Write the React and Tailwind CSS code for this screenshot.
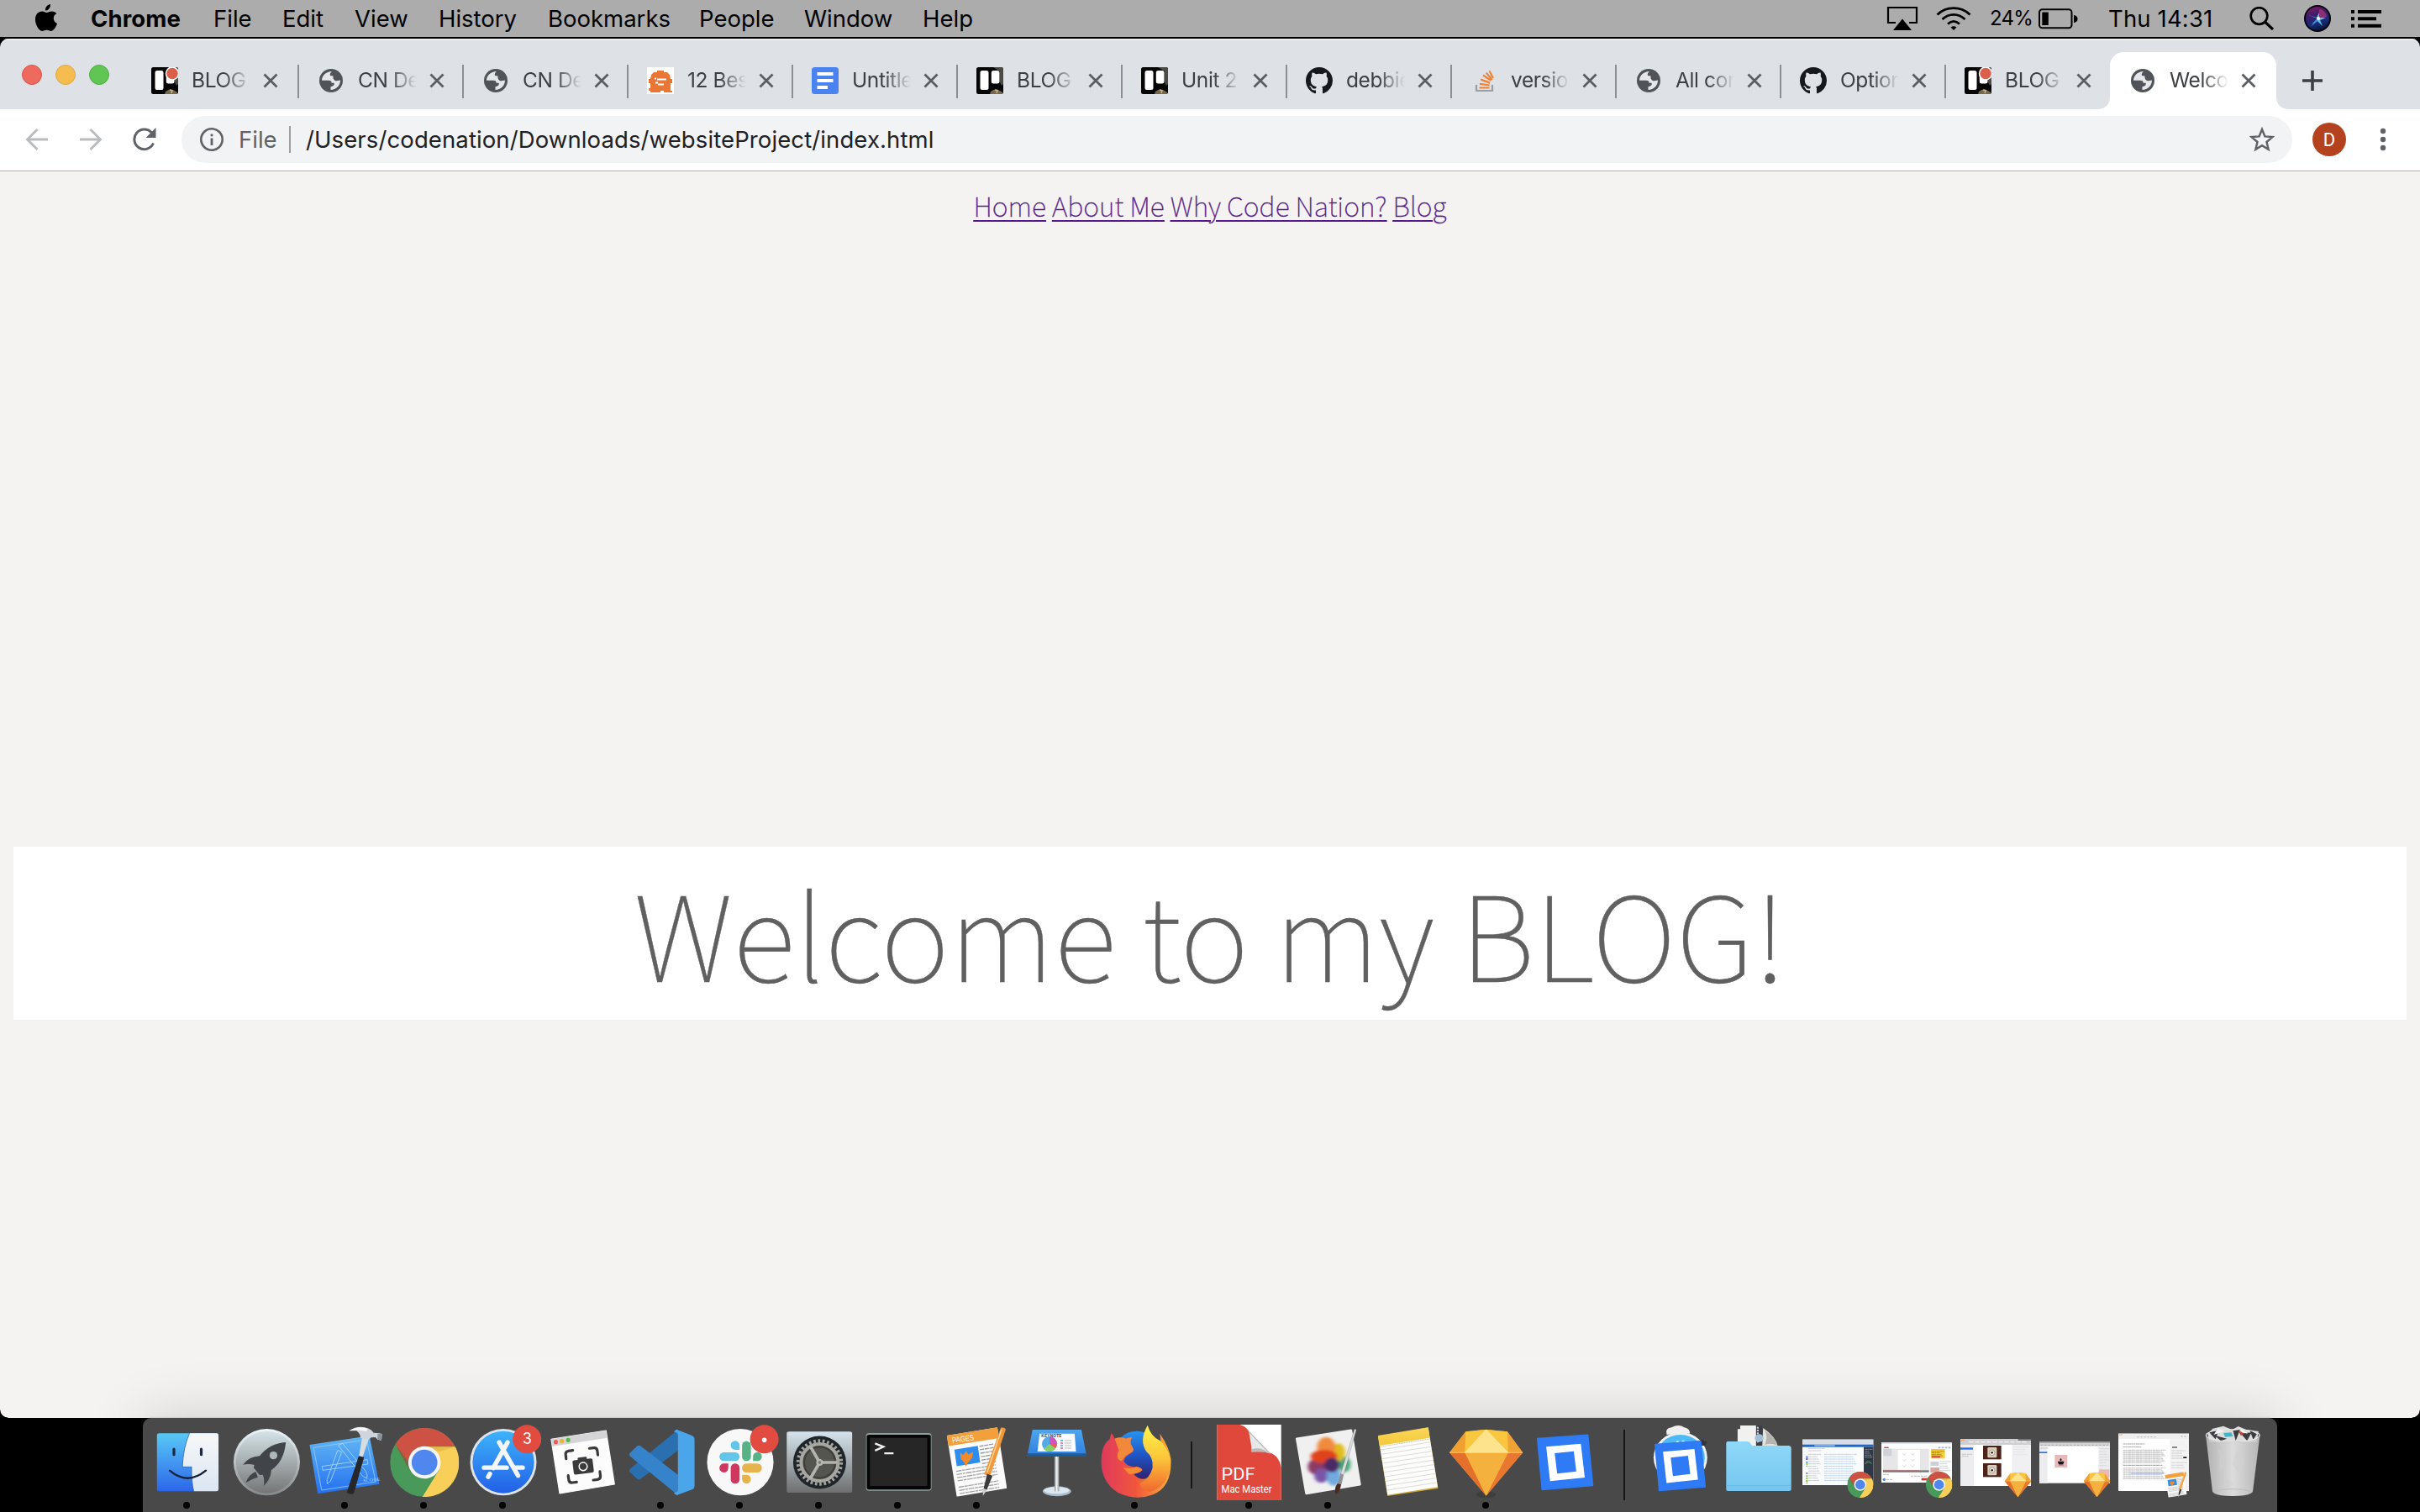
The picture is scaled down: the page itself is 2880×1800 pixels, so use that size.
import React from "react";

const MENUS = [
  ["Chrome", "w-[146px] font-bold tracking-[0.1px]"],
  ["File", "w-[82px]"],
  ["Edit", "w-[86px]"],
  ["View", "w-[100px]"],
  ["History", "w-[130px]"],
  ["Bookmarks", "w-[180px]"],
  ["People", "w-[125px]"],
  ["Window", "w-[141px]"],
  ["Help", "w-[100px]"],
];

const TABS = [
  ["trelloBadge", "BLOG"],
  ["globe", "CN De"],
  ["globe", "CN De"],
  ["orange", "12 Bes"],
  ["docs", "Untitle"],
  ["trello", "BLOG"],
  ["trello", "Unit 2"],
  ["github", "debbie"],
  ["stack", "versio"],
  ["globe", "All con"],
  ["github", "Option"],
  ["trelloBadge", "BLOG"],
  ["globe", "Welco"],
];

/* ---------- menu bar ---------- */

function AppleLogo() {
  return (
    <svg className="h-8 w-[26px]" viewBox="0 0 26 32">
      <path d="M18 0c.3 2.2-.6 4-1.700 5.400C15.100 6.900 13.400 7.700 11.900 7.600 11.600 5.500 12.500 3.700 13.600 2.400 14.800 1.100 16.600.2 18 0ZM25.300 10.900c-2.300 1.400-3.500 3.400-3.500 5.900 0 2.900 1.600 5.100 4.200 6.200-1.200 3.900-4 8.900-7.300 8.900-1.900 0-2.800-1.200-5.200-1.200-2.500 0-3.500 1.200-5.200 1.200C4.700 31.900 0 25 0 18.200 0 12.100 3.700 8.500 8 8.500c2.400 0 4 1.400 5.600 1.400 1.500 0 3.300-1.500 6.200-1.500 2.100 0 4.200 1 5.500 2.500Z" />
    </svg>
  );
}

function MenuBar() {
  return (
    <div className="flex h-11 shrink-0 items-center bg-[#acacac] pr-[46px] text-[27.500px] text-black">
      <div className="flex w-[108px] pl-[42px] pb-[3px]"><AppleLogo /></div>
      {MENUS.map(([t, c]) => (
        <div key={t} className={"whitespace-nowrap leading-[44px] " + c}>{t}</div>
      ))}
      <div className="flex-1" />
      <svg className="mr-[21px] h-[30px] w-[38px]" viewBox="0 0 38 30">
        <path d="M11 20H2V2h34v18h-9" fill="none" stroke="#000" strokeWidth="2.200" />
        <path d="M19 15.500 30 29H8Z" />
      </svg>
      <svg className="mr-[22px] h-[30px] w-[42px]" viewBox="0 0 42 30" fill="none" stroke="#000" strokeWidth="2.800">
        <path d="M1.500 10.500c11-10.500 28-10.500 39 0M7.500 16c8-7.500 19-7.500 27 0M14 21.500c4.500-4 9.500-4 14 0" />
        <path d="M17.500 25.500c2.200-1.600 4.800-1.600 7 0L21 29Z" fill="#000" stroke="none" />
      </svg>
      <div className="w-[58px] whitespace-nowrap text-[24px] leading-[44px] tracking-[-0.8px]">24%</div>
      <svg className="mr-[36px] h-[25px] w-[47px]" viewBox="0 0 47 25">
        <rect x="1" y="1.200" width="38.500" height="22" rx="3.500" fill="none" stroke="#000" strokeWidth="2" />
        <rect x="4.300" y="4.500" width="7.500" height="15.500" />
        <path d="M42 8c6 0 6 9 0 9Z" />
      </svg>
      <div className="w-[168px] whitespace-nowrap leading-[44px] tracking-[0.150px]">Thu 14:31</div>
      <svg className="mr-[36px] h-7 w-[29px]" viewBox="0 0 29 28" fill="none" stroke="#000" strokeWidth="2.700">
        <circle cx="11.500" cy="11" r="9.800" /><path d="m18.500 18 9.500 9" strokeWidth="3.200" />
      </svg>
      <svg className="mr-[24px] h-8 w-8" viewBox="0 0 32 32">
        <defs>
          <linearGradient id="siri" x1="0.300" y1="0" x2="0.600" y2="1">
            <stop offset="0" stopColor="#7a1766" /><stop offset=".35" stopColor="#3b1d6a" /><stop offset=".7" stopColor="#152c7a" /><stop offset="1" stopColor="#0b1233" />
          </linearGradient>
        </defs>
        <circle cx="16" cy="16" r="16" fill="#050510" /><circle cx="16" cy="16" r="14" fill="url(#siri)" />
        <path d="M18 5c5 0 9 5 9 9l-9 2Z" fill="#c23a78" opacity=".6" />
        <path d="M16 16 5 12l10 3 3-6 0 6 8 0-7 3 3 7-6-6-7 4Z" fill="#5fc4dc" />
        <path d="M16 16 8 26l9-8Z" fill="#3a8fe0" />
        <circle cx="17" cy="16" r="2" fill="#e8fbff" />
      </svg>
      <svg className="h-[21px] w-9" viewBox="0 0 36 21">
        <path d="M0 0h4v4H0zM8 0h28v4H8zM0 8.300h4v4H0zM8 8.300h22v4H8zM0 16.700h4v4H0zM8 16.700h28v4H8z" />
      </svg>
    </div>
  );
}

/* ---------- tab strip ---------- */

function Favicon({ kind }) {
  if (kind === "globe")
    return (
      <svg className="h-8 w-8" viewBox="-2 -2 32 32">
        <circle cx="14" cy="14" r="14" fill="#505459" />
        <path d="M3 13.800C3 8 8 3.200 15 3c-2 1.600-2.600 3.500-2 5l3.600.4C15.800 11.500 18 14.600 21 14.300l4-.8C25 20 20 24.800 13.500 25v-3.800c3.600-.3 5-2.600 4-4.400h-3c.4-2-1-3-3.500-3Z" fill="#e4e6e9" />
      </svg>
    );
  if (kind === "docs")
    return (
      <svg className="h-8 w-8" viewBox="0 0 32 32">
        <rect width="32" height="32" rx="3.500" fill="#4a83ef" />
        <path d="M6.500 6h19v4h-19zM6.500 14h19v4h-19zM6.500 22H19v4H6.500z" fill="#fff" />
      </svg>
    );
  if (kind === "orange")
    return (
      <svg className="h-8 w-8" viewBox="0 0 32 32">
        <rect width="32" height="32" fill="#fff" />
        <path d="M12 4h8v2h4l3 3 1 5h2v5h-2v9h2v2H20v-2h-4v2H4v-2H2v-3h2v-6H2v-5h2l1-5 3-3h4Z" fill="#ea7635" />
        <path d="M9 13.500h2M12 14.500h11M10 18.500h3M13 20.500h7" stroke="#fff" strokeWidth="1.800" />
      </svg>
    );
  if (kind === "github")
    return (
      <svg className="h-8 w-8" viewBox="0 0 16 16">
        <path fill="#16181b" d="M8 0C3.580 0 0 3.580 0 8c0 3.540 2.290 6.530 5.470 7.590.4.070.55-.17.55-.38 0-.19-.01-.82-.01-1.490-2.010.37-2.530-.49-2.690-.94-.09-.23-.48-.94-.82-1.130-.28-.15-.68-.52-.01-.53.63-.01 1.080.58 1.230.82.72 1.210 1.870.87 2.330.66.07-.52.28-.87.51-1.070-1.780-.2-3.640-.89-3.640-3.950 0-.87.31-1.590.82-2.150-.08-.2-.36-1.020.08-2.120 0 0 .67-.21 2.200.82.64-.18 1.320-.27 2-.27s1.360.09 2 .27c1.530-1.040 2.200-.82 2.200-.82.44 1.100.16 1.920.08 2.120.51.56.82 1.270.82 2.150 0 3.070-1.870 3.750-3.650 3.950.29.25.54.73.54 1.480 0 1.070-.01 1.930-.01 2.200 0 .21.15.46.55.38A8.010 8.010 0 0 0 16 8c0-4.420-3.580-8-8-8Z" />
      </svg>
    );
  if (kind === "stack")
    return (
      <svg className="h-8 w-8" viewBox="0 0 32 32">
        <path d="M7 21v7h19v-7" fill="none" stroke="#9b9ea3" strokeWidth="2.200" />
        <path d="M10.500 24.500h12M10.900 19.800l11.700 1.700M12.200 14.600l10.900 4M15 9.500l9.400 6.300M18.800 6.600l7 8.500M22.500 4.500l4.500 8.500" stroke="#ee8236" strokeWidth="2.200" />
      </svg>
    );
  return (
    <svg className="h-8 w-8" viewBox="0 0 32 32">
      <rect width="32" height="32" rx="2.500" fill="#050505" />
      <path d="M20 0h10q2 0 2 2v18l-2 2-2-4V5Z" fill="#4b4a44" />
      <path d="M17 29q6-5 11-1l3 2v2H16Z" fill="#75694d" />
      <path d="M22 27l3 1-1 3" stroke="#c9b78c" strokeWidth="1.500" fill="none" />
      <rect x="4.500" y="4" width="10" height="23" rx="2.500" fill="#fff" />
      <rect x="17.800" y="4" width="9.700" height="15.500" rx="2.500" fill="#fff" />
      {kind === "trelloBadge" && <circle cx="25" cy="7.500" r="7.500" fill="#dc5f4b" stroke="#fff" strokeWidth="1.500" />}
    </svg>
  );
}

function Tab({ kind, label, first, active, last }) {
  return (
    <div className={"relative flex h-[68px] shrink-0 items-center pl-[23px] " + (first ? "w-[198px]" : "w-[196px]") + (active ? " z-10 w-[198px] rounded-t-[16px] bg-white" : "")}>
      {active && (
        <svg className="absolute -left-4 bottom-0 h-4 w-[230px]" viewBox="0 0 230 16" fill="#fff">
          <path d="M0 16Q16 16 16 0V16ZM230 16Q214 16 214 0V16Z" />
        </svg>
      )}
      <Favicon kind={kind} />
      <div className="ml-[16px] h-9 w-[70px] overflow-hidden whitespace-nowrap text-[24.500px] leading-[35px] tracking-[-0.4px] text-[#3c4043] [mask-image:linear-gradient(to_right,black_55%,transparent_100%)]">
        {label}
      </div>
      <svg className="ml-[15px] h-[18px] w-[18px]" viewBox="0 0 18 18"><path d="m1.500 1.500 15 15m0-15-15 15" stroke="#5a5d61" strokeWidth="2.800" /></svg>
      {!active && !last && <div className="absolute -right-px top-[15px] h-10 w-[2px] bg-[#8b8e93]" />}
    </div>
  );
}

function TabStrip() {
  return (
    <div className="flex h-[84px] shrink-0 items-end border-t-2 border-[#eceef0] bg-[#dee1e6]">
      <div className="flex h-[68px] w-[157px] items-center gap-4 pb-[15px] pl-[26px]">
        <div className="h-6 w-6 rounded-full border border-[#d9564c] bg-[#ee6a5f]" />
        <div className="h-6 w-6 rounded-full border border-[#dda73c] bg-[#f5bd4f]" />
        <div className="h-6 w-6 rounded-full border border-[#4fae41] bg-[#61c554]" />
      </div>
      {TABS.map(([k, l], i) => (
        <Tab key={i} kind={k} label={l} first={i === 0} active={i === 12} last={i === 11} />
      ))}
      <svg className="mb-[22px] ml-[31px] h-6 w-6" viewBox="0 0 24 24"><path d="M12 0v24M0 12h24" stroke="#3c4043" strokeWidth="3.600" /></svg>
    </div>
  );
}

/* ---------- address bar ---------- */

function Toolbar() {
  return (
    <div className="flex h-[74px] shrink-0 items-center border-b border-[#b3b3b3] bg-white pb-px">
      <svg className="ml-[30px] h-7 w-7" viewBox="0 0 28 28" fill="none" stroke="#b9bbbd" strokeWidth="2.800"><path d="M27 14H3M14.500 2 2.500 14l12 12" /></svg>
      <svg className="ml-[36px] h-7 w-7" viewBox="0 0 28 28" fill="none" stroke="#b9bbbd" strokeWidth="2.800"><path d="M1 14h24M13.500 2l12 12-12 12" /></svg>
      <svg className="ml-[36px] h-7 w-7" viewBox="0 0 28 28">
        <path d="M24.500 18.500A11.800 11.800 0 1 1 22.500 6" fill="none" stroke="#5f6368" strokeWidth="3" />
        <path d="M27.500 0v12h-12Z" fill="#5f6368" />
      </svg>
      <div className="ml-[30px] flex h-14 w-[2512px] items-center rounded-full bg-[#f1f3f4] pl-[22px] text-[27.500px] leading-[56px]">
        <svg className="h-7 w-7" viewBox="0 0 28 28"><circle cx="14" cy="14" r="12.700" fill="none" stroke="#5f6368" strokeWidth="2.600" /><path d="M12.600 12.500h2.800V21h-2.800zM12.600 7.500h2.800v2.800h-2.800z" fill="#5f6368" /></svg>
        <div className="ml-[18px] w-[60px] text-[#5f6368]">File</div>
        <div className="h-8 w-[2px] bg-[#9b9ea2]" />
        <div className="ml-[18px] whitespace-nowrap tracking-[0.110px] text-[#202124]">/Users/codenation/Downloads/websiteProject/index.html</div>
        <svg className="ml-auto mr-[21px] h-[30px] w-[30px]" viewBox="0 0 30 30">
          <path d="m15 3 3.400 8.400 9 .7-6.900 5.900 2.100 8.800L15 22.100l-7.600 4.700 2.100-8.800-6.900-5.900 9-.7Z" fill="none" stroke="#5f6368" strokeWidth="2.500" />
        </svg>
      </div>
      <div className="ml-6 flex h-10 w-10 items-center justify-center rounded-full bg-[#b4421f] font-['Roboto'] text-[22px] text-white">D</div>
      <svg className="ml-[40px] h-7 w-2" viewBox="0 0 8 28" fill="#5f6368"><circle cx="4" cy="4" r="3.200" /><circle cx="4" cy="14" r="3.200" /><circle cx="4" cy="24" r="3.200" /></svg>
    </div>
  );
}

/* ---------- page ---------- */

function Page() {
  return (
    <div className="h-[1484px] shrink-0 rounded-b-[10px] bg-[#f4f3f1] px-4 font-['Noto_Sans_CJK_SC','Open_Sans',sans-serif] font-thin">
      <nav className="flex h-[80px] items-center justify-center gap-[7px] whitespace-nowrap text-[32px] text-[#551a8b] underline decoration-2 underline-offset-[4px] [-webkit-text-stroke:0.350px_#551a8b]">
        <a>Home</a><a>About Me</a><a>Why Code Nation?</a><a>Blog</a>
      </nav>
      <div className="mt-[724px] flex h-[206px] items-center justify-center bg-white">
        <h1 className="whitespace-nowrap pb-[6px] text-[140px] leading-[200px] text-[#606060] [-webkit-text-stroke:0.400px_#606060]">Welcome to my BLOG!</h1>
      </div>
    </div>
  );
}

/* ---------- dock ---------- */

function Cell({ cx, scale = 2.376, top = 84, running, children }) {
  const sy = 3;
  return (
    <div className="relative h-[112px] w-[94px] shrink-0">
      <svg className="h-[112px] w-[94px] overflow-visible" preserveAspectRatio="none" viewBox={`${cx - 47 * scale} ${top} ${94 * scale} ${112 * sy}`}>
        {children}
      </svg>
      {running && <div className="absolute bottom-1 left-[42.500px] h-2 w-2 rounded-full bg-black" />}
    </div>
  );
}

/* Group whose units are real pixels inside a cell. */
function Px({ x, y, children }) {
  return <g transform={`translate(${x} ${y}) scale(2.376 3)`}>{children}</g>;
}

function ChromeArt(p) {
  return (
    <svg {...p} viewBox="0 0 100 100" preserveAspectRatio="none">
      <circle cx="50" cy="50" r="50" fill="#48995a" />
      <path d="M7.700 23.500A50 50 0 0 1 94.500 27H50A24 24 0 0 0 28 61Z" fill="#ce5244" />
      <path d="M50 27H94.500A50 50 0 0 1 47 100L71 61Z" fill="#f8cf58" />
      <path d="M50 27H94.500L72 34Z" fill="#d9a93c" opacity=".5" />
      <path d="m7.700 23.500 20 37 -3-14Z" fill="#2e7440" opacity=".5" />
      <circle cx="50" cy="50" r="23.500" fill="#f5f5f5" /><circle cx="50" cy="50" r="18.700" fill="#5087ee" />
    </svg>
  );
}

function SketchArt(p) {
  return (
    <svg {...p} viewBox="0 0 100 100" preserveAspectRatio="none">
      <path d="M22 3.400 50 0l29 3.400L100 35 50 100 0 35Z" fill="#f6a93b" />
      <path d="M22 3.400 21 35H0Z" fill="#f0a02f" /><path d="M79 3.400 80 35h20Z" fill="#f0a234" />
      <path d="M22 3.400 50 0 21 35Z" fill="#f9c63f" /><path d="M79 3.400 50 0l30 35Z" fill="#f9c63f" />
      <path d="M50 0 21 35h59Z" fill="#fde38b" />
      <path d="M0 35h21l29 65Z" fill="#e5702c" /><path d="M100 35H80L50 100Z" fill="#e8782f" /><path d="M21 35h59L50 100Z" fill="#f5b13d" />
      <path d="M0 35h100M21 35 50 0l30 35" fill="none" stroke="#fdeaa0" strokeWidth=".8" />
    </svg>
  );
}

function PagesArt(p) {
  return (
    <svg {...p} viewBox="0 0 100 100" preserveAspectRatio="none">
      <path d="M0 11.700 84 0l16 88-83.500 12Z" fill="#fbfbfb" />
      <path d="M0 11.700 84 0l3 15.500L3 27Z" fill="#f3a03c" />
      <g transform="matrix(1 -.14 .18 1 0 0)">
        {[0, 1, 2, 3, 4, 5].map((i) => <path key={i} d={`M48 ${34 + i * 5}h24`} stroke="#9a9a9a" strokeWidth="1.600" strokeDasharray="7 1" />)}
        {[0, 1, 2, 3, 5, 6, 7].map((i) => <path key={i} d={`M4 ${64 + i * 4.600}h66`} stroke="#a5a5a5" strokeWidth="1.600" strokeDasharray="9 1 5 1" />)}
      </g>
      <path d="m12.500 32 39-5.300 4 24-39 5.300Z" fill="#2f8ded" />
      <path d="m22 36 5 4 5-6 4 5 8-4-2 9-8 8-2 5-3-6-6-6Z" fill="#f08a2b" />
      <path d="M90 0q7 0 8 3L72 70l-10-2Z" fill="#f0983a" /><path d="m91 3-24 62" stroke="#ffd494" strokeWidth="2" />
      <path d="m67 67 9 3-10 21-6 2Z" fill="#3a3a3a" /><path d="m60 88 7 2-7 9Z" fill="#c9ccd0" />
    </svg>
  );
}

function Badge({ x, children }) {
  return <Px x={x} y={160}><circle r="17" fill="#e24b3f" />{children}</Px>;
}

function BracketsArt() {
  return (
    <>
      <path d="M1022 158 1163 145 1177 325 1035 340Z" fill="#2f7af5" stroke="#2f7af5" strokeWidth="5" strokeLinejoin="round" />
      <path d="m1046 187 98-11 11 121-98 13Z" fill="#fff" /><path d="m1070 210 54-7 7 72-54 8Z" fill="#2f7af5" />
    </>
  );
}

function Defs() {
  const G = ({ id, a, b, c, h }) => (
    <linearGradient id={id} x1="0" y1="0" x2={h ? 1 : 0} y2={h ? 0 : 1}>
      <stop offset="0" stopColor={a} />{c && <stop offset=".5" stopColor={c} />}<stop offset="1" stopColor={b} />
    </linearGradient>
  );
  return (
    <svg className="absolute h-0 w-0">
      <defs>
        <G id="gFinder" a="#58c9f6" b="#2c66ea" /><G id="gFace" a="#f7f7f8" b="#dbe6f3" /><G id="gRocket" a="#d5e3e8" b="#757575" />
        <G id="gRim" a="#eef8fc" b="#85888a" /><G id="gXcode" a="#62b7f3" b="#2470f0" /><G id="gStore" a="#3db3fa" b="#2260e8" />
        <G id="gPref" a="#d5e3ec" b="#6f6f6f" /><G id="gKey" a="#4fa5ee" b="#2f7fe0" /><G id="gFolder" a="#8fd8f8" b="#75c6f0" />
        <G id="gFox" a="#e03a5c" c="#f0563c" b="#f9b43c" h /><G id="gFlame" a="#fff44a" c="#fbc539" b="#f0662f" /><G id="gGlobe" a="#2793ef" c="#1f55c4" b="#30206f" />
        <G id="gTrash" a="#bdbdbd" c="#ececec" b="#c2c2c2" h /><G id="gPole" a="#8d9298" c="#f4f6f8" b="#8d9298" h /><G id="gYellow" a="#fbd75a" b="#f3c838" />
        <filter id="soft" x="-20%" y="-20%" width="140%" height="140%"><feGaussianBlur stdDeviation="5" /></filter>
      </defs>
    </svg>
  );
}

function Mini({ k, art, children }) {
  return (
    <Cell cx={141 + 282 * k} scale={3} top={-6}>
      {children}
      {art}
    </Cell>
  );
}

function Dashes({ x, y, w, n, step, color = "#9aa0a6", sw = 1.600 }) {
  return Array.from({ length: n }, (_, i) => (
    <path key={i} d={`M${x} ${y + i * step}h${w - ((i * 13) % 17)}`} stroke={color} strokeWidth={sw} strokeDasharray="9 1 5 1.500 12 1" />
  ));
}

function Dock() {
  return (
    <div className="flex h-[112px] w-[2540px] rounded-t-[10px] bg-[#494949] pl-[5.500px] shadow-[0_0_70px_rgba(0,0,0,0.160),0_0_2px_rgba(0,0,0,0.300)]">
      <Cell cx={196} running>
        <rect x="110" y="139" width="174" height="207" rx="7" fill="url(#gFinder)" />
        <path d="M202 139Q184 190 182 259H208Q207 310 214 346H278Q284 346 284 339V146Q284 139 278 139Z" fill="url(#gFace)" />
        <path d="M202 139Q184 190 182 259H208Q207 310 214 346" fill="none" stroke="#1e5fae" strokeWidth="2" />
        <Px x={196} y={242}>
          <path d="M-16-15.500v6.500M16.500-15.500v6.500" stroke="#1b2a3c" strokeWidth="3.200" strokeLinecap="round" />
          <path d="M-21 10Q0 28 22 10" fill="none" stroke="#152236" strokeWidth="2.400" strokeLinecap="round" />
        </Px>
      </Cell>
      <Cell cx={420}>
        <ellipse cx="421" cy="242" rx="94" ry="119" fill="url(#gRim)" /><ellipse cx="421" cy="242" rx="87" ry="111" fill="url(#gRocket)" />
        <path d="M475 171Q430 174 401 220Q370 222 354 251Q372 247 386 252L384 262 401 288 410 287Q416 305 412 327Q432 305 434 270Q470 240 475 171Z" fill="#414549" />
        <path d="M390 276 396 296Q382 300 362 316Q370 285 390 276Z" fill="#414549" /><ellipse cx="440" cy="218" rx="11" ry="14" fill="#aeb8bb" />
      </Cell>
      <Cell cx={642} running>
        <path d="M541 180 710 148 738 320 564 355Z" fill="url(#gXcode)" />
        <path d="m552 190 150-28 26 150-153 30Z" fill="none" stroke="#9bd1fa" strokeWidth="2" />
        <path d="m576 257 128-24 2 16-128 22ZM622 182l12-7 66 100q6 14 3 24-12-4-17-14ZM620 200l12 5-32 105-9 9-1-14Z" fill="none" stroke="#b9defb" strokeWidth="2" />
        <text x="692" y="312" fontSize="14" fill="#a5d2fb" transform="rotate(-6 700 312)">XCODE</text>
        <path d="m690 150 20 2-20 75-10-3Z" fill="#d8dde2" /><path d="m680 220 15 4-29 130q-10 6-20-4Z" fill="#26272a" />
        <path d="M653 130q26-22 55-8 9 4 14 15l16 2 8 2-2 24-11-4-6-8-12 1-8 8-22-6q0-16-12-26Z" fill="#cfd5dc" /><path d="M653 130q26-20 52-8l-4 10q-20-8-48-2Z" fill="#f7f9fb" /><path d="m733 140 13 1-2 24-11-5Z" fill="#8b939b" />
      </Cell>
      <Cell cx={867} running><ChromeArt x="770" y="120" width="195" height="246" /></Cell>
      <Cell cx={1090} running>
        <ellipse cx="1090" cy="242" rx="94" ry="119" fill="#dfe4e8" /><ellipse cx="1090" cy="242" rx="87" ry="111" fill="url(#gStore)" />
        <Px x={1090} y={242}>
          <path d="M5-23.500-12 7M-5-23.500 17.500 16M-23 6.500H4M14 6.500h9M-16 14l-2 3.500" stroke="#f3f7fb" strokeWidth="5.400" strokeLinecap="round" />
        </Px>
        <Badge x={1157}><text y="6" textAnchor="middle" fontSize="18" fill="#fff" fontFamily="Inter">3</text></Badge>
      </Cell>
      <Cell cx={1313}>
        <path d="m1225 160 155-31 24 192-155 33Z" fill="#fcfcfc" stroke="#fcfcfc" strokeWidth="3" strokeLinejoin="round" />
        <path d="m1225 160 155-31 3 26-155 31Z" fill="#d5d5d8" />
        <ellipse cx="1238" cy="170" rx="6" ry="8" fill="#ee5b52" /><ellipse cx="1255" cy="167" rx="6" ry="8" fill="#f0b13b" /><ellipse cx="1273" cy="163" rx="6" ry="8" fill="#4fb944" />
        <Px x={1315} y={253}>
          <g transform="rotate(-7)" fill="none" stroke="#3a3a3a" strokeWidth="3.200" strokeLinecap="round" strokeLinejoin="round">
            <path d="M-19-10v-5q0-4 4-4h5M10-19h5q4 0 4 4v5M19 10v5q0 4-4 4h-5M-10 19h-5q-4 0-4-4v-5" />
            <rect x="-11" y="-6" width="22" height="15" rx="1" fill="#3a3a3a" strokeWidth="2" /><path d="M-4-8h8" /><circle cy="1.500" r="4.800" fill="#3a3a3a" stroke="#fff" strokeWidth="1.600" />
          </g>
        </Px>
      </Cell>
      <Cell cx={1537} running>
        <path d="m1447 276 22 26q5 3 9 0L1584 200V126L1447 268Z" fill="#2a70b0" />
        <path d="m1447 211 22-27q5-4 9 0L1584 287V360L1447 219Z" fill="#3584cb" />
        <path d="m1580 125 44 22q7 4 7 12V328q0 8-7 12L1580 360 1572 352Q1584 350 1584 340V146Q1584 136 1572 133Z" fill="#4aa5ea" />
      </Cell>
      <Cell cx={191} running>
        <ellipse cx="191" cy="242" rx="94" ry="119" fill="#f8f8f8" />
        <path d="M189 198V183A12.500 16 0 1 0 177 198Z" fill="#63c5ea" /><rect x="132" y="207" width="57" height="31" rx="12" ry="15.500" fill="#63c5ea" />
        <rect x="196" y="167" width="25" height="71" rx="12" ry="15.500" fill="#57b386" /><path d="M227 238V222A12.500 16 0 1 1 239 238Z" fill="#57b386" />
        <path d="M157 247V263A12.500 16 0 1 1 145 247Z" fill="#cf375f" /><rect x="164" y="247" width="25" height="72" rx="12" ry="15.500" fill="#cf375f" />
        <rect x="196" y="247" width="56" height="32" rx="12" ry="15.500" fill="#e5b44d" /><path d="M196 287V303A12.500 16 0 1 0 208 287Z" fill="#e5b44d" />
        <Badge x={259}><circle cy="1" r="2.800" fill="#fff" /></Badge>
      </Cell>
      <Cell cx={415} running>
        <rect x="323" y="133" width="185" height="218" rx="7" fill="url(#gPref)" />
        <Px x={416} y={243}>
          <circle r="31.500" fill="#20252a" /><circle r="25.700" fill="none" stroke="#a2a29e" strokeWidth="4" strokeDasharray="2.700 2.680" />
          <circle r="22" fill="#55554f" stroke="#a7a7a2" strokeWidth="4" /><circle r="18.500" fill="none" stroke="#3e3e3c" strokeWidth="2" />
          <path d="M0 0h21M0 0-11-19M0 0-11 19" stroke="#b4b4af" strokeWidth="3.600" /><circle r="4" fill="#b9b9b4" /><circle r="1.800" fill="#777" />
        </Px>
      </Cell>
      <Cell cx={638} running>
        <rect x="547" y="138" width="185" height="206" rx="9" fill="#8ea09f" /><rect x="549" y="144" width="181" height="196" rx="7" fill="#060606" /><rect x="558" y="155" width="162" height="172" fill="#262626" />
        <Px x={570} y={202}><path d="m1-9 10 4-10 4.500M12 2.800h11" fill="none" stroke="#f1f1f1" strokeWidth="2.300" /></Px>
      </Cell>
      <Cell cx={861} running>
        <PagesArt x="775" y="118" width="170" height="247" />
        <g transform="translate(791 173) scale(2.376 3) rotate(-7)"><text fontSize="9.500" fill="#fff" fontFamily="Liberation Sans" textLength="26" lengthAdjust="spacingAndGlyphs">PAGES</text></g>
      </Cell>
      <Cell cx={1084}>
        <ellipse cx="1086" cy="346" rx="40" ry="18" fill="#a9bccb" /><ellipse cx="1085" cy="343" rx="36" ry="12" fill="#dbe6ef" />
        <rect x="1079" y="222" width="13" height="124" fill="url(#gPole)" />
        <path d="M1017 126H1155L1170 220H1002Z" fill="url(#gKey)" /><path d="M1003 211H1169L1170 222H1002Z" fill="#1d5b96" />
        <path d="M1037 140H1136L1140 204H1031Z" fill="#fbfcfd" />
        <Px x={1042} y={152}><text fontSize="4.600" fontWeight="700" fill="#333" textLength="24" fontFamily="Liberation Sans">KEYNOTE</text></Px>
        <Px x={1065} y={177}>
          <circle r="9" fill="#55a9e8" /><path d="M0 0V-9A9 9 0 0 1 9 0Z" fill="#d451b8" /><path d="M0 0 9 0A9 9 0 0 1 7 5Z" fill="#ef5a4e" /><path d="M0 0 7 5A9 9 0 0 1-7 6Z" fill="#87d163" />
          <path d="M13-4h3M13 2h3" stroke="#4f9fe8" strokeWidth="1.500" /><path d="M13-1h3M13 5h3" stroke="#e7619c" strokeWidth="1.500" /><path d="M18-4h8M18-1h8M18 2h8M18 5h8" stroke="#bbb" />
        </Px>
      </Cell>
      <Cell cx={1308} running>
        <ellipse cx="1312" cy="218" rx="66" ry="87" fill="url(#gGlobe)" />
        <path d="M1240 138Q1248 148 1250 158Q1268 150 1282 158Q1288 152 1299 154Q1291 170 1298 184Q1305 196 1301 205Q1291 215 1282 222Q1276 232 1276 240Q1290 262 1312 258Q1326 262 1328 270Q1320 282 1303 284Q1330 320 1358 286Q1388 240 1378 140Q1405 190 1409 232Q1412 330 1358 358Q1310 382 1258 350Q1212 312 1212 240Q1212 180 1236 160Z" fill="url(#gFox)" />
        <path d="M1343 110Q1352 150 1378 165Q1410 205 1407 260Q1398 330 1350 348Q1330 345 1320 320Q1350 300 1357 262Q1360 225 1340 205Q1318 165 1343 110Z" fill="url(#gFlame)" />
        <path d="M1250 158Q1268 150 1282 158Q1288 152 1299 154Q1291 170 1298 184Q1305 196 1301 205Q1280 215 1270 238Q1250 230 1262 200Z" fill="#f08a3a" />
        <path d="M1274 262Q1300 268 1312 258Q1326 262 1328 270Q1315 286 1290 284Z" fill="#f58a35" />
      </Cell>
      <div className="flex w-[41.500px] items-center justify-center"><div className="h-14 w-[2px] bg-[#161616]" /></div>
      <Cell cx={205} running>
        <path d="M116 108H297V378H116Z" fill="#fff" />
        <path d="M116 108H180Q204 116 212 150L214 205H252Q290 210 297 262V378H116Z" fill="#e1483c" />
        <path d="M200 122Q216 150 212 206Q240 200 268 212Z" fill="#b9b9b9" /><path d="M206 136 262 210Q240 186 214 196Z" fill="#e8e8e8" />
        <Px x={128} y={306}><text fontSize="20.500" fill="#fff" fontFamily="Roboto" textLength="40" lengthAdjust="spacingAndGlyphs">PDF</text></Px>
        <Px x={128} y={350}><text fontSize="12" fill="#fff" fontFamily="Roboto" textLength="60" lengthAdjust="spacingAndGlyphs">Mac Master</text></Px>
      </Cell>
      <Cell cx={428} running>
        <path d="m341 158 153-30 25 194-151 32Z" fill="#f0f0f0" stroke="#f0f0f0" strokeWidth="7" strokeLinejoin="round" />
        <g filter="url(#soft)">
          <ellipse cx="398" cy="258" rx="26" ry="30" fill="#8b3b64" /><ellipse cx="410" cy="290" rx="20" ry="26" fill="#7954a8" /><ellipse cx="446" cy="295" rx="21" ry="32" fill="#6fabe0" />
          <ellipse cx="476" cy="250" rx="17" ry="28" fill="#48a679" /><ellipse cx="459" cy="207" rx="18" ry="32" fill="#e0bd1f" /><ellipse cx="424" cy="190" rx="26" ry="38" fill="#f08a3c" />
          <ellipse cx="418" cy="222" rx="38" ry="24" fill="#e0421a" /><ellipse cx="440" cy="252" rx="22" ry="26" fill="#4a2c66" />
        </g>
        <path d="m504 124 5 2-36 162-8-4Z" fill="#dcdcde" stroke="#8a8a8a" strokeWidth="1" /><path d="m464 282 9 5-6 35-11-5Z" fill="#909294" /><path d="m456 318 10 3q-2 24-14 36-8-20 4-39Z" fill="#4a2a20" />
      </Cell>
      <Cell cx={651}>
        <path d="m570 150 142-32 28 218-143 27Z" fill="#caa93a" /><path d="m571 150 141-30 27 211-142 28Z" fill="#fdfdfb" /><path d="m570 147 142-29 4 37-142 28Z" fill="url(#gYellow)" />
        {Array.from({ length: 10 }, (_, i) => <path key={i} d={`m${577 + i * 2.100} ${198 + i * 16} 140-27`} stroke="#c9c9c9" strokeWidth="1.800" />)}
        <path d="m575 187 141-28" stroke="#888" strokeWidth="1.500" strokeDasharray="3 2" />
      </Cell>
      <Cell cx={875} running><ellipse cx="876" cy="358" rx="28" ry="12" fill="#333" opacity=".5" /><SketchArt x="773" y="125" width="207" height="237" /></Cell>
      <Cell cx={1098}><BracketsArt /></Cell>
      <div className="flex w-[43px] items-center justify-center pl-[5px]"><div className="h-[84px] w-[2px] bg-[#161616]" /></div>
      <Cell cx={1421}>
        <ellipse cx="1423" cy="226" rx="76" ry="91" fill="#eef2f5" /><ellipse cx="1423" cy="226" rx="69" ry="82" fill="#4fb9f3" />
        <path d="M1384 140Q1380 120 1398 118Q1418 104 1434 118Q1450 122 1450 140Q1418 136 1384 144Z" fill="#efefef" />
        <path d="M1470 172l14-12 4 6 10 2-4 14-12 2Z" fill="#33353c" /><ellipse cx="1415" cy="173" rx="5" ry="7" fill="#e8f6fd" /><ellipse cx="1431" cy="171" rx="5" ry="7" fill="#e8f6fd" />
        <g transform="translate(425 35) scale(.907)"><BracketsArt /></g>
      </Cell>
      <Cell cx={62} scale={1.912}>
        <path d="M14 124H20V111H58V200H14Z" fill="#f1f1ef" /><path d="M56 111H70V190H56Z" fill="#3b3e44" /><path d="M60 116v60" stroke="#ccd" strokeWidth="4" strokeDasharray="6 4" /><path d="M72 120Q100 150 106 186H70Z" fill="#e3e3e0" /><path d="M76 130Q84 152 76 180Q90 172 104 182Q98 150 76 130Z" fill="#b4b4b0" />
        <ellipse cx="63" cy="156" rx="10" ry="14" fill="#9fc0d8" />
        <path d="M-8 168H36Q42 168 44 176L47 183H130Q136 184 136 192V340Q136 345 130 345H-6Q-12 345-12 339V174Q-12 168-8 168Z" fill="url(#gFolder)" /><path d="M-12 326H136" stroke="#5fb3dd" strokeWidth="1.500" />
      </Cell>
      <Mini k={0} art={<ChromeArt x="175" y="186" width="93" height="93" />}>
        <rect x="15" y="71" width="253" height="163" fill="#fafbfc" /><rect x="15" y="71" width="253" height="18" fill="#d9dee6" /><rect x="15" y="89" width="253" height="9" fill="#2268c0" /><rect x="58" y="90" width="73" height="6" fill="#7ba8df" />
        <Dashes x={36} y={103} w={60} n={2} step={8} /><Dashes x={36} y={124} w={46} n={12} step={8.500} /><Dashes x={93} y={124} w={116} n={12} step={8.500} color="#7fb3ea" />
        <path d="M31 130v14M31 149v6" stroke="#4f8fe8" strokeWidth="6" /><path d="M31 138v6M31 189v5" stroke="#a04fc8" strokeWidth="6" /><path d="M31 156v12M31 198v30" stroke="#84cf45" strokeWidth="6" strokeDasharray="7 2" />
        <rect x="234" y="98" width="34" height="136" fill="#303746" /><Dashes x={238} y={106} w={28} n={5} step={7} color="#c9d0da" /><path d="M240 158a12 12 0 0 1 22 0" fill="none" stroke="#4fb560" strokeWidth="3" /><path d="M240 158a12 12 0 0 1 6-9" fill="none" stroke="#d44" strokeWidth="3" />
      </Mini>
      <Mini k={1} art={<ChromeArt x="456" y="186" width="94" height="93" />}>
        <rect x="297" y="81" width="252" height="144" fill="#fdfdfd" /><rect x="297" y="81" width="252" height="5" fill="#d3dae4" /><rect x="307" y="98" width="16" height="4" fill="#e33" /><path d="M500 100h46" stroke="#9db7e0" strokeWidth="5" strokeDasharray="8 4" />
        <rect x="303" y="104" width="164" height="84" fill="#e6e6e8" /><rect x="356" y="108" width="79" height="75" fill="#fff" /><rect x="304" y="104" width="30" height="26" fill="#cfd2d6" />
        {[[379, 124], [409, 124], [379, 145], [409, 145], [379, 166], [409, 166]].map(([a, b]) => <path key={a + "" + b} d={`m${a - 6} ${b - 3} 6 5 6-5`} fill="none" stroke="#aab" strokeWidth="1.500" />)}
        <rect x="303" y="181" width="164" height="7" fill="#77787c" /><path d="M303 181h130" stroke="#d33" strokeWidth="1.200" /><rect x="474" y="105" width="50" height="34" fill="#f6cd3c" /><Dashes x={477} y={113} w={44} n={4} step={5.500} color="#8a6d1e" sw={2} /><rect x="477" y="130" width="30" height="6" fill="#dc4a58" />
        <rect x="472" y="150" width="30" height="15" fill="#cdd0d4" /><rect x="472" y="171" width="32" height="18" fill="#dba7a0" /><Dashes x={506} y={150} w={38} n={5} step={8} /><path d="M303 196h24M315 214h24M402 202h60" stroke="#a9acb0" strokeWidth="2.500" strokeDasharray="9 3" /><circle cx="307" cy="214" r="5" fill="#3989d8" /><rect x="440" y="209" width="24" height="8" fill="#d33" />
      </Mini>
      <Mini k={2} art={<SketchArt x="737" y="189" width="95" height="88" />}>
        <rect x="579" y="69" width="252" height="168" fill="#fff" /><rect x="579" y="69" width="252" height="21" fill="#cfcfd1" /><path d="M583 73h12" stroke="#e85" strokeWidth="3" strokeDasharray="4 1" /><path d="M610 80h210" stroke="#f2f2f2" strokeWidth="4" strokeDasharray="16 5" /><rect x="785" y="69" width="46" height="6" fill="#77787c" />
        <rect x="579" y="90" width="48" height="147" fill="#ededf0" /><rect x="579" y="100" width="45" height="7" fill="#1f6cf0" /><rect x="763" y="90" width="68" height="147" fill="#f0f0f2" /><Dashes x={585} y={124} w={36} n={2} step={7} /><Dashes x={768} y={98} w={56} n={4} step={9} color="#d5d5d8" />
        {[93, 156].map((y) => <g key={y}><rect x="660" y={y} width="65" height="49" fill="#4c2318" /><rect x="676" y={y + 6} width="33" height="37" rx="4" fill="#d9cdbd" /><circle cx="692" cy={y + 25} r="10" fill="#f4efe7" stroke="#8b7a68" strokeWidth="2" /><circle cx="692" cy={y + 25} r="4" fill="#3f2519" /></g>)}
      </Mini>
      <Mini k={3} art={<SketchArt x="1019" y="189" width="95" height="88" />}>
        <rect x="861" y="80" width="252" height="147" fill="#fff" /><rect x="861" y="80" width="252" height="15" fill="#d6d6d8" /><rect x="861" y="80" width="252" height="3" fill="#8c8d90" /><path d="M866 91h240" stroke="#9c9ca0" strokeWidth="2.500" strokeDasharray="8 5" />
        <rect x="861" y="95" width="29" height="132" fill="#ededf0" /><rect x="861" y="115" width="28" height="5" fill="#2b78f0" /><rect x="1072" y="95" width="41" height="132" fill="#ececef" /><Dashes x={865} y={102} w={28} n={1} step={8} /><Dashes x={1076} y={104} w={36} n={7} step={10} color="#c5c5ca" />
        <rect x="916" y="126" width="45" height="45" fill="#e7b9bb" /><path d="M927 149h22q-1 11-7 11h-8q-6 0-7-11ZM930 161h17v2h-17ZM935 147q-2-4 3-10 4 6 2 10Z" fill="#1a1416" /><rect x="1074" y="178" width="37" height="30" fill="#e7b9bb" />
      </Mini>
      <Mini k={4} art={<PagesArt x="1309" y="187" width="79" height="91" />}>
        <rect x="1143" y="50" width="252" height="205" fill="#fff" /><rect x="1143" y="50" width="252" height="19" fill="#efeff0" /><path d="M1146 54h12" stroke="#e96" strokeWidth="3" strokeDasharray="4 1" /><path d="M1210 62h70M1366 60h24" stroke="#c5c5c8" strokeWidth="4" strokeDasharray="7 5" />
        <rect x="1327" y="69" width="68" height="186" fill="#f3f3f4" /><Dashes x={1160} y={87} w={78} n={2} step={11} color="#555" /><Dashes x={1160} y={109} w={152} n={10} step={5} color="#8b8b8b" /><Dashes x={1160} y={163} w={140} n={1} step={5} color="#333" /><Dashes x={1160} y={173} w={152} n={9} step={4.800} color="#999" /><path d="M1187 192h118" stroke="#5c93e8" strokeWidth="2" />
        <rect x="1335" y="96" width="18" height="6" fill="#88898c" /><Dashes x={1333} y={111} w={50} n={4} step={9} color="#a8a8ac" /><rect x="1375" y="133" width="12" height="5" fill="#111" /><Dashes x={1333} y={154} w={56} n={3} step={9} color="#b8b8bc" />
      </Mini>
      <Cell cx={1141} scale={1.912}>
        <path d="M1084 140 1096 122 1120 113 1140 126 1154 114 1172 126 1200 132 1196 170H1088Z" fill="#dcdcdc" />
        <path d="m1088 136 14 24 8-34ZM1100 146l14 20 14-8ZM1142 130l6 36 10-40ZM1160 140l14 26 10-30ZM1180 128l8 34 8-20Z" fill="#3a3c40" /><path d="m1120 138 18-2 4 14-18 2Z" fill="#43b5c4" /><path d="m1154 130 14 8-8 10Z" fill="#b8452c" />
        <path d="m1108 120 14 12-24 12ZM1156 118l20 22-14-4Z" fill="#f4f4f4" />
        <path d="M1080 146Q1084 170 1141 170Q1198 170 1203 146L1187 346Q1184 363 1141 363Q1098 363 1095 346Z" fill="url(#gTrash)" opacity=".9" />
        <path d="M1098 350Q1110 338 1141 338Q1172 338 1185 350" fill="none" stroke="#bdbdbd" strokeWidth="3" />
        <path d="m1108 190 20 40-16 50ZM1150 200l20 30-10 60-20-40ZM1120 290l24 30-20 10Z" fill="#cfcfcf" opacity=".5" />
        <ellipse cx="1141.500" cy="146" rx="61" ry="22" fill="none" stroke="#e9e9e9" strokeWidth="2.500" />
      </Cell>
    </div>
  );
}

export default function App() {
  return (
    <div className="flex h-[1800px] w-[2880px] flex-col overflow-hidden bg-black font-['Inter',sans-serif]">
      <Defs />
      <MenuBar />
      <div className="mt-[2px] flex h-[1642px] shrink-0 flex-col overflow-hidden rounded-[10px]">
        <TabStrip />
        <Toolbar />
        <Page />
      </div>
      <div className="flex justify-center"><Dock /></div>
    </div>
  );
}
